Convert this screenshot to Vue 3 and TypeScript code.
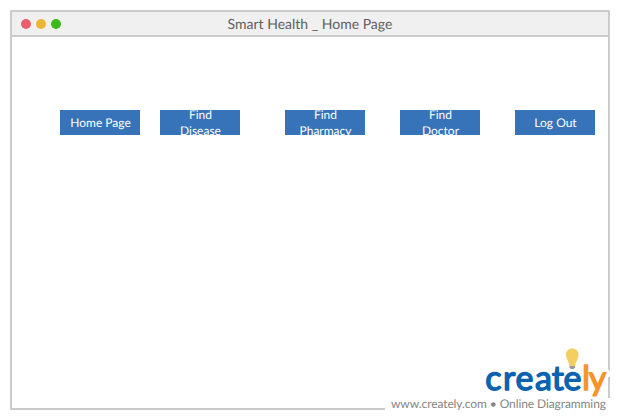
<script setup lang="ts">
interface NavItem {
  label: string
  gap: number
}

const nav: NavItem[] = [
  { label: 'Home Page', gap: 0 },
  { label: 'Find Disease', gap: 20 },
  { label: 'Find Pharmacy', gap: 45 },
  { label: 'Find Doctor', gap: 35 },
  { label: 'Log Out', gap: 35 },
]
</script>

<template>
  <div class="page">
    <main class="window">
      <header class="titlebar">
        <div class="lights">
          <span class="light red"></span>
          <span class="light amber"></span>
          <span class="light green"></span>
        </div>
        <h1 class="title">Smart Health _ Home Page</h1>
      </header>
      <nav class="nav">
        <button
          v-for="item in nav"
          :key="item.label"
          class="item"
          :style="{ marginLeft: item.gap + 'px' }"
        >
          <span>{{ item.label }}</span>
        </button>
      </nav>
    </main>
    <svg class="brand" viewBox="380 340 240 80" width="240" height="80">
      <path d="M385 398H612V416H385Z" fill="#fff" />
      <circle cx="606.500" cy="373.500" r="4" fill="#fff" />
      <text class="logo" y="389.500" x="485.200 503 515.500 535 551.800 563.500 582 588.700"><tspan class="blue">create</tspan><tspan class="orange">ly</tspan></text>
      <path d="M572.300 348.500c-3.700 0-6.300 2.700-6.300 6.200 0 4.200 2.900 5.900 3.300 11.300h6c.4-5.400 3.300-7.100 3.300-11.300 0-3.500-2.600-6.200-6.300-6.200Z" fill="#f5ce62" />
      <path d="M569.500 366h5.600v1.500l-1.500 1.500h-2.600l-1.500-1.500Z" fill="#999" />
      <text class="caption" x="391" y="408" textLength="215">www.creately.com • Online Diagramming</text>
    </svg>
  </div>
</template>

<style>
body {
  margin: 0;
  background: #fff;
}
</style>

<style scoped>
.page {
  position: relative;
  box-sizing: border-box;
  width: 620px;
  height: 420px;
  padding: 10px;
  overflow: hidden;
  font-family: Lato, sans-serif;
  text-rendering: geometricPrecision;
}
.window {
  box-sizing: border-box;
  height: 400px;
  border: 2px solid #cbcbcb;
  border-radius: 1px;
}
.titlebar {
  display: grid;
  grid-template-columns: 1fr auto 1fr;
  align-items: center;
  height: 23px;
  border-bottom: 2px solid #cbcbcb;
  background: #f0f0f0;
}
.lights {
  display: flex;
  gap: 5px;
  padding-left: 8.700px;
}
.light {
  width: 10px;
  height: 10px;
  border-radius: 50%;
}
.red { background: #eb5f6b; }
.amber { background: #edb734; }
.green { background: #3bbb1b; }
.title {
  margin: 0;
  font-size: 14px;
  font-weight: 400;
  line-height: 23px;
  color: #606060;
}
.nav {
  display: flex;
  padding: 73px 0 0 48px;
}
.item {
  display: flex;
  align-items: center;
  justify-content: center;
  flex: none;
  width: 80px;
  height: 25px;
  padding: 0 9px 0 10px;
  border: 0;
  overflow: hidden;
  background: #3673b8;
  color: #fff;
  font-family: inherit;
  font-size: 12px;
  line-height: 16px;
  text-align: center;
  text-rendering: inherit;
}
.item span {
  flex: none;
  max-width: 62px;
}
.brand {
  position: absolute;
  left: 380px;
  top: 340px;
}
.logo {
  font-size: 34px;
  font-weight: 400;
  stroke-width: 1.400px;
  stroke-linejoin: round;
}
.blue {
  fill: #0b62ae;
  stroke: #0b62ae;
}
.orange {
  fill: #f7942a;
  stroke: #f7942a;
}
.caption {
  font-size: 12px;
  fill: #858585;
}
</style>
